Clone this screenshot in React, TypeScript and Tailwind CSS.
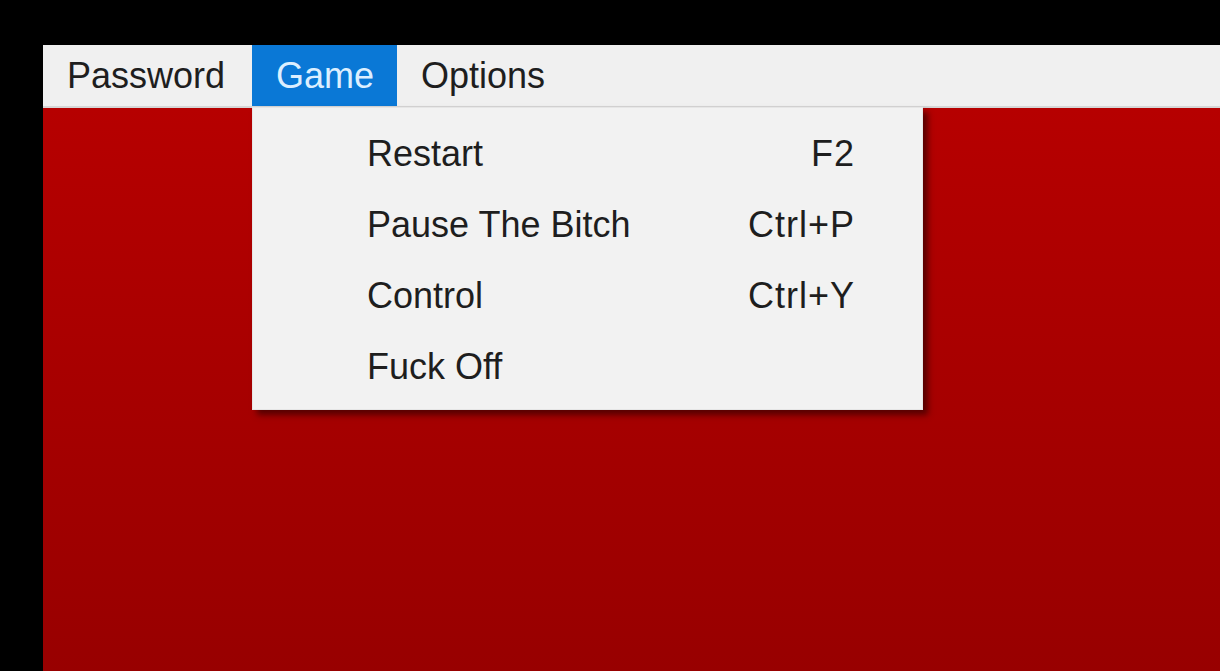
const MENUS = [
  { label: "Password", w: "w-[209px]" },
  { label: "Game", w: "w-[145px]" },
  { label: "Options", w: "w-[183px]" },
];

const ITEMS: { label: string; shortcut?: string }[] = [
  { label: "Restart", shortcut: "F2" },
  { label: "Pause The Bitch", shortcut: "Ctrl+P" },
  { label: "Control", shortcut: "Ctrl+Y" },
  { label: "Fuck Off" },
];

export default function App() {
  return (
    <div
      className="h-[671px] w-[1220px] overflow-hidden bg-black pl-[43px] pt-[45px] text-[36px] leading-none"
      style={{ fontFamily: '"Liberation Sans", Arial, sans-serif' }}
    >
      <div className="relative flex h-full flex-col">
        {/* menu bar */}
        <div className="flex h-[63px] shrink-0 border-b-2 border-[#d6d6d6] bg-[#f0f0f0]">
          {MENUS.map((m) =>
            m.label === "Game" ? (
              <div key={m.label} className={`${m.w} flex items-center bg-[#0a78d6] pl-[24px] text-[#dcefff]`}>
                {m.label}
              </div>
            ) : (
              <div key={m.label} className={`${m.w} flex items-center pl-[24px] text-[#1e1e1e]`}>
                {m.label}
              </div>
            )
          )}
        </div>

        {/* client area */}
        <div className="flex-1 bg-gradient-to-b from-[#b60000] to-[#980000]" />

        {/* open dropdown */}
        <div className="absolute left-[209px] top-[62px] flex h-[303px] w-[671px] flex-col border border-[#e6e6e6] bg-[#f2f2f2] pb-[7px] pl-[114px] pr-[67px] pt-[10px] text-[#1e1e1e] shadow-[5px_5px_6px_rgba(60,0,0,0.75)]">
          {ITEMS.map((it) => (
            <div key={it.label} className="flex h-[71.5px] items-center justify-between">
              <span>{it.label}</span>
              {it.shortcut && <span className="tracking-[1px]">{it.shortcut}</span>}
            </div>
          ))}
        </div>
      </div>
    </div>
  );
}
